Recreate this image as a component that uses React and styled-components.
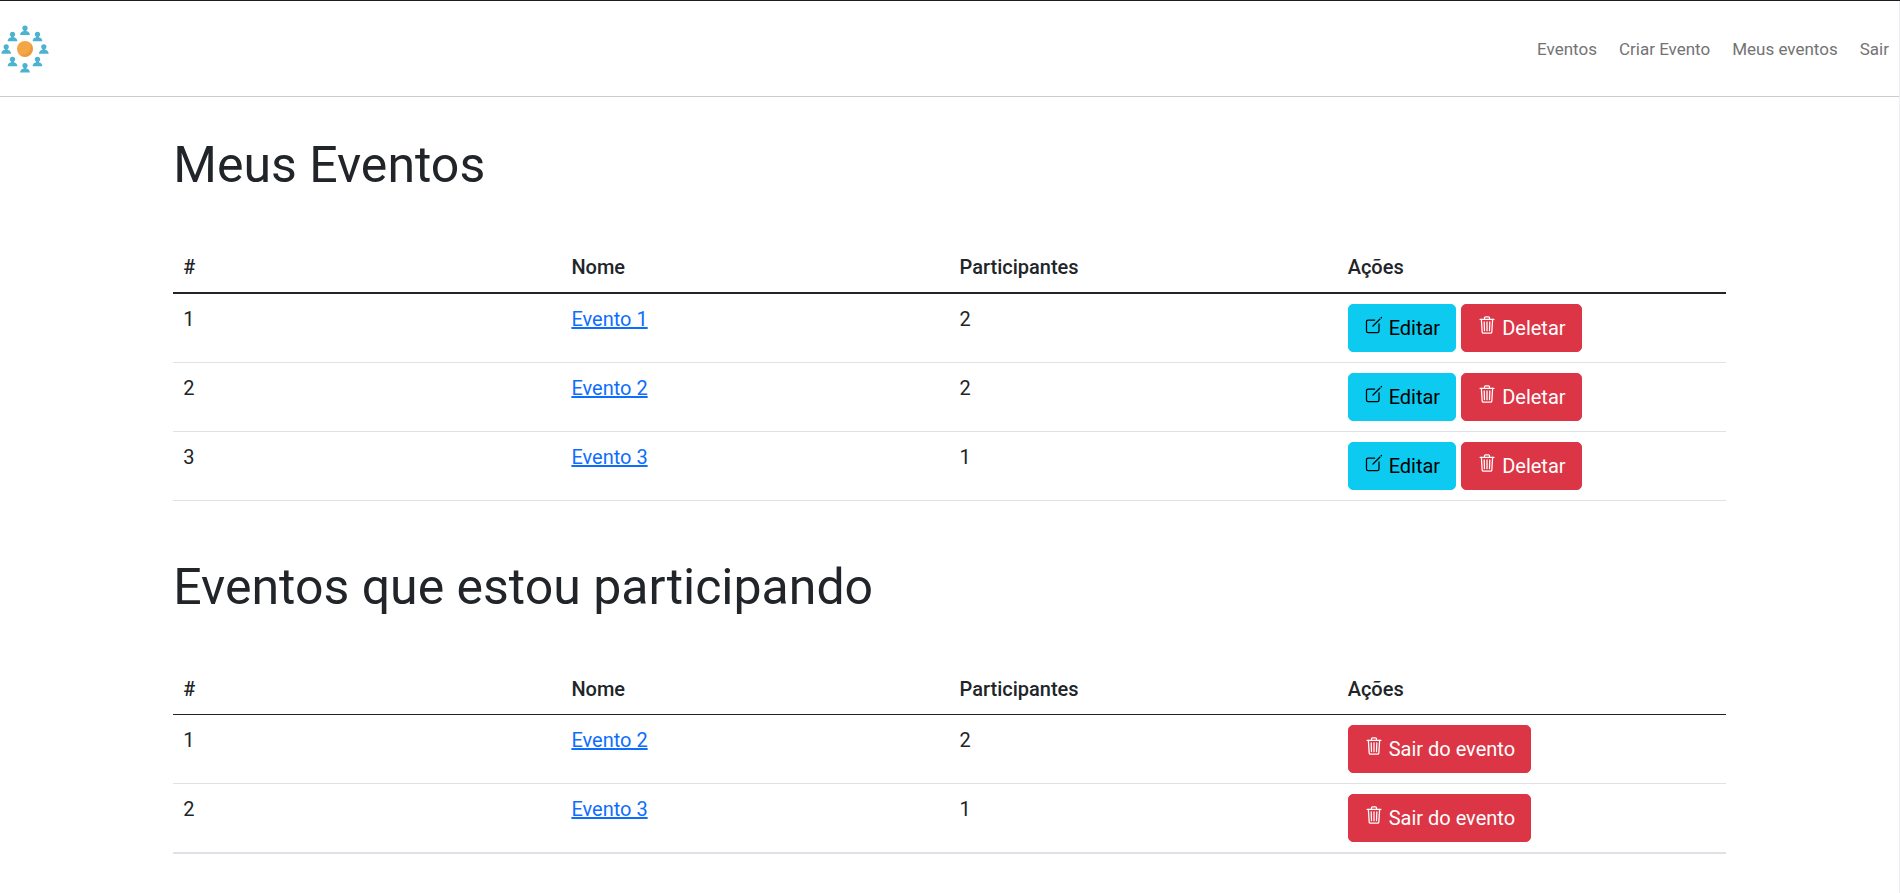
import React from "react";
import styled, { createGlobalStyle } from "styled-components";
import { IoCreateOutline, IoTrashOutline } from "react-icons/io5";

const GlobalStyle = createGlobalStyle`
  *, *::before, *::after { box-sizing: border-box; }
  body {
    margin: 0;
    background: #fff;
    color: #212529;
    font-family: Roboto, "Liberation Sans", sans-serif;
    font-size: 20px;
    line-height: 30px;
  }
`;

const Page = styled.div`
  display: flex;
  flex-direction: column;
  min-height: 100vh;
  border-top: 1px solid #1c1b22;
`;

const Body = styled.div`
  flex: 1;
  border-right: 1px solid #ededf0;
`;

const Header = styled.header`
  display: flex;
  align-items: center;
  justify-content: space-between;
  height: 96px;
  padding-right: 10px;
  border-bottom: 1px solid #cccccc;
`;

const Brand = styled.a`
  display: flex;
`;

const Nav = styled.nav`
  display: flex;
  gap: 22px;
`;

const NavLink = styled.a`
  color: #737373;
  font-size: 17px;
  text-decoration: none;
`;

const Section = styled.section`
  width: calc(100% * 10 / 12);
  margin: 0 auto;
  padding: 38px 15px 18px;
`;

const Title = styled.h1`
  margin: 0 0 47px;
  font-size: 50px;
  line-height: 60px;
  font-weight: 400;
`;

const Table = styled.table`
  width: 100%;
  table-layout: fixed;
  border-collapse: separate;
  border-spacing: 0;
`;

const HeadCell = styled.th`
  padding: 10px;
  border-bottom: ${(p) => p.$rule}px solid #212529;
  font-weight: 500;
  text-align: left;
`;

const Cell = styled.td`
  padding: 10px;
  border-bottom: 1px solid #dee2e6;
  vertical-align: top;

  tr:last-child > & {
    border-bottom-width: ${(p) => p.$end}px;
  }
`;

const EventLink = styled.a`
  color: #0d6efd;
  text-decoration: underline;
`;

const Actions = styled.div`
  display: flex;
  gap: 5px;
`;

const Button = styled.button`
  display: inline-flex;
  align-items: baseline;
  gap: 5px;
  padding: 8px 15px;
  border: 1px solid ${(p) => (p.$tone === "info" ? "#0dcaf0" : "#dc3545")};
  border-radius: 5px;
  background: ${(p) => (p.$tone === "info" ? "#0dcaf0" : "#dc3545")};
  color: ${(p) => (p.$tone === "info" ? "#000" : "#fff")};
  font: inherit;
  text-decoration: none;
  white-space: nowrap;
  cursor: pointer;
`;

const people = [
  [25, 6.2], [37.5, 12.5], [43.8, 25], [37.5, 37.5],
  [25, 43.8], [12.5, 37.5], [6.2, 25], [12.5, 12.5],
];

function Logo() {
  return (
    <svg width="50" height="50" viewBox="0 0 50 50" role="img" aria-label="Eventos">
      <circle cx="25" cy="25" r="8" fill="#f4a647" />
      <path d="M30.6 19.3a8 8 0 0 1-11.3 11.3c8 1.4 12.6-4 11.3-11.3z" fill="#ec9a3c" />
      {people.map(([x, y]) => (
        <g key={`${x}-${y}`} transform={`translate(${x} ${y})`} fill="#4bb3d0">
          <circle cx="0" cy="-2.2" r="2.6" />
          <path d="M-1.3-.8h2.6v1.5c2.2.2 3.4 1.7 3.6 4H-4.9c.2-2.3 1.4-3.8 3.6-4z" />
        </g>
      ))}
    </svg>
  );
}

function EventTable({ title, events, rule, end, renderActions }) {
  return (
    <Section>
      <Title>{title}</Title>
      <Table>
        <thead>
          <tr>
            {["#", "Nome", "Participantes", "Ações"].map((label) => (
              <HeadCell key={label} scope="col" $rule={rule}>{label}</HeadCell>
            ))}
          </tr>
        </thead>
        <tbody>
          {events.map((event, i) => (
            <tr key={event.name}>
              <Cell $end={end}>{i + 1}</Cell>
              <Cell $end={end}><EventLink href="#">{event.name}</EventLink></Cell>
              <Cell $end={end}>{event.count}</Cell>
              <Cell $end={end}><Actions>{renderActions(event)}</Actions></Cell>
            </tr>
          ))}
        </tbody>
      </Table>
    </Section>
  );
}

const owned = [
  { name: "Evento 1", count: 2 },
  { name: "Evento 2", count: 2 },
  { name: "Evento 3", count: 1 },
];

const joined = owned.slice(1);

export default function App() {
  return (
    <Page>
      <GlobalStyle />
      <Body>
        <Header>
          <Brand href="#"><Logo /></Brand>
          <Nav>
            <NavLink href="#">Eventos</NavLink>
            <NavLink href="#">Criar Evento</NavLink>
            <NavLink href="#">Meus eventos</NavLink>
            <NavLink href="#">Sair</NavLink>
          </Nav>
        </Header>
        <main>
          <EventTable
            title="Meus Eventos"
            events={owned}
            rule={2}
            end={1}
            renderActions={() => (
              <>
                <Button as="a" href="#" $tone="info"><IoCreateOutline />Editar</Button>
                <Button type="submit" $tone="danger"><IoTrashOutline />Deletar</Button>
              </>
            )}
          />
          <EventTable
            title="Eventos que estou participando"
            events={joined}
            rule={1}
            end={2}
            renderActions={() => (
              <Button type="submit" $tone="danger"><IoTrashOutline />Sair do evento</Button>
            )}
          />
        </main>
      </Body>
    </Page>
  );
}
